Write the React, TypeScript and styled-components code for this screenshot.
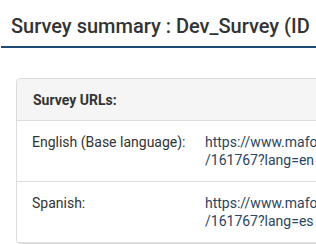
import styled, { createGlobalStyle } from 'styled-components';

const GlobalStyle = createGlobalStyle`
  body {
    margin: 0;
    background: #fff;
    font-family: Roboto, "Liberation Sans", sans-serif;
    overflow: hidden;
  }
`;

const urls = [
  { label: 'English (Base language):', lang: 'en' },
  { label: 'Spanish:', lang: 'es' },
];

function App() {
  return (
    <Page>
      <GlobalStyle />
      <TitleBar>
        <Title>Survey summary : Dev_Survey (ID 161767)</Title>
      </TitleBar>
      <Card>
        <CardHeader>Survey URLs:</CardHeader>
        <Table>
          <tbody>
            {urls.map((u) => (
              <Row key={u.lang}>
                <Label>{u.label}</Label>
                <Url>
                  https://www.maforms.com/limesurvey/index.php
                  <br />
                  /161767?lang={u.lang}
                </Url>
              </Row>
            ))}
          </tbody>
        </Table>
      </Card>
    </Page>
  );
}
export default App;

const Page = styled.div`
  width: 316px;
  height: 244px;
  overflow: hidden;
`;

const TitleBar = styled.div`
  margin-left: 1px;
  padding: 14px 0 0 10px;
  height: 32px;
  border-bottom: 2px solid #1f4a75;
  white-space: nowrap;
`;

const Title = styled.h1`
  margin: 0;
  font-size: 20px;
  font-weight: 500;
  line-height: 24px;
  color: #333;
`;

const Card = styled.div`
  margin: 30px 0 0 16px;
  width: 520px;
  border: 1px solid #ddd;
  border-radius: 4px;
`;

const CardHeader = styled.div`
  height: 42px;
  box-sizing: border-box;
  padding: 0 16px;
  display: flex;
  align-items: center;
  background: #f5f5f5;
  border-bottom: 1px solid #ddd;
  border-radius: 4px 4px 0 0;
  font-size: 14px;
  font-weight: 700;
  color: #333;
`;

const Table = styled.table`
  border-collapse: collapse;
  width: 100%;
`;

const Row = styled.tr`
  border-bottom: 1px solid #ddd;
`;

const Label = styled.td`
  width: 188px;
  box-sizing: border-box;
  padding: 12px 15px;
  vertical-align: top;
  font-size: 14px;
  line-height: 18px;
  color: #333;
`;

const Url = styled.td`
  padding: 12px 0;
  vertical-align: top;
  font-size: 14px;
  line-height: 18px;
  color: #2a4560;
  white-space: nowrap;
`;
